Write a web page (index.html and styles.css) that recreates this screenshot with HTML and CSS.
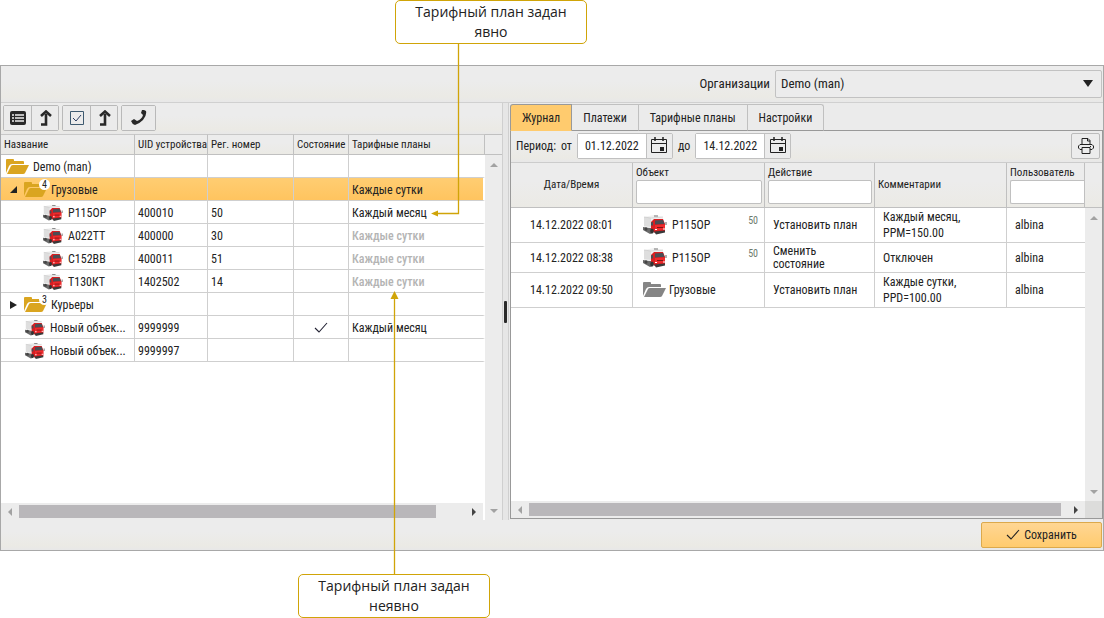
FILE: index.html
```html
<!DOCTYPE html>
<html lang="ru">
<head>
<meta charset="utf-8">
<title>Тарифные планы</title>
<link rel="stylesheet" href="styles.css">
</head>
<body>
<svg class="sprite" width="0" height="0" aria-hidden="true">
  <symbol id="truck" viewBox="0 0 24 20">
    <path d="M0 12l8 1 2 5-3 1-7-4z" fill="#6a6a6a"/>
    <path d="M1 2L11 0l9 2v3L9 13 1 12z" fill="#f1f1f1"/>
    <path d="M1 2l7 1v9l-7-1z" fill="#dedede"/>
    <path d="M1 2l7 1 12-1" stroke="#c4c4c4" stroke-width=".6" fill="none"/>
    <path d="M11 1h4" stroke="#777" stroke-width="1"/>
    <path d="M8 7l3-3 9 0 2 5v7l-10 2-4-3z" fill="#d81f22"/>
    <path d="M12 5.500l8-.5 1.500 4-9.500.5z" fill="#4a4e55"/>
    <path d="M8 7.500l2-.5v3.500H8z" fill="#4a4e55"/>
    <path d="M12 10l10-.5v5l-10 1z" fill="#f02a2c"/>
    <path d="M14 12.500h6" stroke="#7a1818" stroke-width="1"/>
    <path d="M11 16.500l11-1v2l-9 2z" fill="#3a3a3a"/>
    <path d="M12 14.500h2M20 14h2" stroke="#fff" stroke-width="1"/>
    <path d="M23 7v3" stroke="#666" stroke-width="1"/>
    <ellipse cx="9" cy="16" rx="1.800" ry="2.500" fill="#333"/>
    <ellipse cx="3" cy="14" rx="1.500" ry="1.800" fill="#444"/>
  </symbol>
  <symbol id="folder" viewBox="0 0 23 16">
    <path d="M0 14V1q0-1 1-1h6q1 0 1 1v1h9q1 0 1 1v2H6Q4 5 3 7z"/>
    <path d="M1 15L5 7q.5-1 2-1h16l-4 8q-.5 1-2 1z"/>
  </symbol>
  <symbol id="check" viewBox="0 0 14 12">
    <path d="M1 6l4 4 8-9" fill="none" stroke="currentColor" stroke-width="1.100"/>
  </symbol>
  <symbol id="up" viewBox="0 0 14 16">
    <path d="M3 14.500h5V4" fill="none" stroke="currentColor" stroke-width="2.600"/>
    <path d="M3 6l5-4.500L13 6" fill="none" stroke="currentColor" stroke-width="2.600"/>
  </symbol>
  <symbol id="calendar" viewBox="0 0 16 17">
    <path d="M.5 2.500h15v13H.5zM.5 6.500h15" fill="none" stroke="currentColor"/>
    <path d="M4 0v4M12 0v4" stroke="currentColor" stroke-width="1.500"/>
    <path d="M9 10h4v4H9z" fill="currentColor"/>
  </symbol>
</svg>

<main class="app">
  <header class="bar org-bar">
    <label for="org">Организации</label>
    <div class="select-box">
      <select id="org"><option>Demo (man)</option></select>
      <svg class="caret" width="10" height="7" viewBox="0 0 10 7"><path d="M0 0h10L5 7z"/></svg>
    </div>
  </header>

  <div class="panes">
    <section class="pane">
      <div class="bar tools">
        <div class="group">
          <button class="tool" aria-label="Список"><svg width="16" height="14" viewBox="0 0 16 14"><rect width="16" height="14" rx="2" fill="currentColor"/><path d="M2 4h2M2 7h2M2 10h2M5 4h9M5 7h9M5 10h9" stroke="#eee" stroke-width="1.600"/></svg></button>
          <button class="tool" aria-label="Свернуть список"><svg width="14" height="16"><use href="#up"/></svg></button>
        </div>
        <div class="group">
          <button class="tool" aria-label="Отметить"><svg width="14" height="14" viewBox="0 0 14 14" fill="none"><path d="M.5 .5h13v13H.5z" stroke="#3e5a70"/><path d="M3 7l3 3 5-6" stroke="#2b3d62"/></svg></button>
          <button class="tool" aria-label="Отмеченные вверх"><svg width="14" height="16"><use href="#up"/></svg></button>
        </div>
        <div class="group">
          <button class="tool wide" aria-label="Телефон"><svg width="16" height="16" viewBox="0 0 16 16"><path d="M11 0q2-.5 4 1 1 4-3 9-4 4-8 5-3-1-4-4l3-2 3 2q5-2 6-6l-2-2z" fill="currentColor"/></svg></button>
        </div>
      </div>
      <div class="grid-area">
        <div class="grid-main">
          <table class="tree">
            <colgroup><col class="c-name"><col class="c-uid"><col class="c-reg"><col class="c-state"><col></colgroup>
            <thead><tr><th>Название</th><th>UID устройства</th><th>Рег. номер</th><th>Состояние</th><th>Тарифные планы</th></tr></thead>
            <tbody>
              <tr><td><div class="node"><svg class="folder" width="23" height="16"><use href="#folder"/></svg>Demo (man)</div></td><td></td><td></td><td></td><td></td></tr>
              <tr class="selected"><td><div class="node branch"><svg class="twist" width="7" height="7" viewBox="0 0 7 7"><path d="M7 0v7H0z"/></svg><span class="badged"><svg class="folder" width="23" height="16"><use href="#folder"/></svg><span class="badge">4</span></span>Грузовые</div></td><td></td><td></td><td></td><td>Каждые сутки</td></tr>
              <tr><td><div class="node leaf deep"><svg width="20" height="18"><use href="#truck"/></svg>Р115ОР</div></td><td>400010</td><td>50</td><td></td><td>Каждый месяц</td></tr>
              <tr><td><div class="node leaf deep"><svg width="20" height="18"><use href="#truck"/></svg>А022ТТ</div></td><td>400000</td><td>30</td><td></td><td class="implicit">Каждые сутки</td></tr>
              <tr><td><div class="node leaf deep"><svg width="20" height="18"><use href="#truck"/></svg>С152ВВ</div></td><td>400011</td><td>51</td><td></td><td class="implicit">Каждые сутки</td></tr>
              <tr><td><div class="node leaf deep"><svg width="20" height="18"><use href="#truck"/></svg>Т130КТ</div></td><td>1402502</td><td>14</td><td></td><td class="implicit">Каждые сутки</td></tr>
              <tr><td><div class="node branch"><svg class="twist" width="7" height="8" viewBox="0 0 7 8"><path d="M0 0l7 4-7 4z"/></svg><span class="badged"><svg class="folder" width="23" height="16"><use href="#folder"/></svg><span class="badge">3</span></span>Курьеры</div></td><td></td><td></td><td></td><td></td></tr>
              <tr><td><div class="node leaf"><svg width="20" height="18"><use href="#truck"/></svg>Новый объек...</div></td><td>9999999</td><td></td><td class="state"><svg width="14" height="12"><use href="#check"/></svg></td><td>Каждый месяц</td></tr>
              <tr><td><div class="node leaf"><svg width="20" height="18"><use href="#truck"/></svg>Новый объек...</div></td><td>9999997</td><td></td><td></td><td></td></tr>
            </tbody>
          </table>
          <div class="hscroll"><span class="arrow left"></span><span class="thumb"></span><span class="arrow right on"></span></div>
        </div>
        <div class="vscroll"><span class="vhead"></span><span class="arrow up"></span><span class="arrow down"></span></div>
      </div>
    </section>

    <div class="splitter"><span class="grip"></span></div>

    <section class="pane">
      <nav class="tabs">
        <button class="tab active">Журнал</button><button class="tab">Платежи</button><button class="tab">Тарифные планы</button><button class="tab">Настройки</button>
      </nav>
      <div class="journal">
        <div class="bar period">
          <span class="period-name">Период:</span>
          <label for="from">от</label>
          <div class="date"><input id="from" type="text" value="01.12.2022"><button aria-label="Выбрать начало"><svg width="16" height="17"><use href="#calendar"/></svg></button></div>
          <label for="to">до</label>
          <div class="date"><input id="to" type="text" value="14.12.2022"><button aria-label="Выбрать конец"><svg width="16" height="17"><use href="#calendar"/></svg></button></div>
          <button class="print" aria-label="Печать"><svg width="16" height="16" viewBox="0 0 16 16" fill="none" stroke="currentColor"><path d="M4 6V.5h6l2 2V6M9.500 .5V3H12M4 11.500H2L.5 10V8L2 6.500h12L15.500 8v2L14 11.500h-2M4 9.500h8v6H4zM12 8.500h1"/></svg></button>
        </div>
        <div class="grid-area">
          <div class="grid-main">
            <table class="log">
              <colgroup><col class="l-date"><col class="l-object"><col class="l-action"><col class="l-comment"><col></colgroup>
              <thead><tr>
                <th class="center">Дата/Время</th>
                <th class="filter"><label for="f-object">Объект</label><input id="f-object" type="text"></th>
                <th class="filter"><label for="f-action">Действие</label><input id="f-action" type="text"></th>
                <th>Комментарии</th>
                <th class="filter cut"><label for="f-user">Пользователь</label><input id="f-user" type="text"></th>
              </tr></thead>
              <tbody>
                <tr class="tall"><td class="center">14.12.2022 08:01</td><td><div class="object"><svg width="24" height="20"><use href="#truck"/></svg>Р115ОР<small>50</small></div></td><td>Установить план</td><td>Каждый месяц,<br>PPM=150.00</td><td>albina</td></tr>
                <tr><td class="center">14.12.2022 08:38</td><td><div class="object"><svg width="24" height="20"><use href="#truck"/></svg>Р115ОР<small>50</small></div></td><td class="tight">Сменить<br>состояние</td><td>Отключен</td><td>albina</td></tr>
                <tr class="tall"><td class="center">14.12.2022 09:50</td><td><div class="object group-object"><svg class="gray" width="23" height="16"><use href="#folder"/></svg>Грузовые</div></td><td>Установить план</td><td>Каждые сутки,<br>PPD=100.00</td><td>albina</td></tr>
              </tbody>
            </table>
            <div class="hscroll"><span class="arrow left"></span><span class="thumb long"></span><span class="arrow right on"></span></div>
          </div>
          <div class="vscroll"><span class="vhead tall-head"></span><span class="arrow up"></span><span class="arrow down"></span><span class="corner"></span></div>
        </div>
      </div>
    </section>
  </div>

  <footer class="bar footer">
    <button class="save"><svg width="14" height="12"><use href="#check"/></svg>Сохранить</button>
  </footer>
</main>

<aside class="note explicit">Тарифный план задан<br>явно</aside>
<aside class="note inherited">Тарифный план задан<br>неявно</aside>
<svg class="leaders" width="600" height="618" viewBox="0 0 600 618" aria-hidden="true">
  <path d="M458.500 43v170.500H437M394.500 574V298" fill="none" stroke="#d0a408" stroke-width="1.300"/>
  <path d="M431 213.500l7-3v6zM394.500 291l4 8h-8z" fill="#d0a408"/>
</svg>
</body>
</html>
```
FILE: styles.css
```css
* { box-sizing: border-box; }

body {
  margin: 0;
  min-height: 100vh;
  padding: 65px 0 67px;
  display: flex;
  flex-direction: column;
  position: relative;
  background: #fff;
  color: #222;
  font: 12px/16px "Roboto Condensed", "Liberation Sans Narrow", Roboto, sans-serif;
}

button, input, select { font: inherit; color: inherit; }
button { padding: 0; cursor: pointer; }
svg { display: block; flex: none; }
.sprite { position: absolute; }

.app {
  flex: 1;
  display: flex;
  flex-direction: column;
  border: 1px solid #a8a8a8;
  background: #ebebeb;
}

.bar {
  display: flex;
  align-items: center;
  background: linear-gradient(#ececec 40%, #ebeae5 85%, #e8e8e8);
}

.org-bar {
  height: 37px;
  padding: 0 1px;
  gap: 5px;
  justify-content: flex-end;
  border-bottom: 1px solid #d0d0d0;
  font-size: 13px;
}
.select-box { position: relative; width: 327px; }
.select-box select {
  appearance: none;
  display: block;
  width: 100%;
  height: 28px;
  padding: 0 5px;
  border: 1px solid #c2c2c2;
  border-radius: 2px;
  background: #ececec;
}
.caret { position: absolute; right: 9px; top: 10px; pointer-events: none; fill: #222; }

.panes {
  flex: 1;
  display: grid;
  grid-template-columns: minmax(0, 501fr) 7px minmax(0, 594fr);
}
.pane { display: flex; flex-direction: column; min-width: 0; }

.tools { height: 31px; padding: 0 2px 2px; gap: 3px; }
.group {
  display: flex;
  border: 1px solid #b9b9b9;
  border-radius: 2px;
}
.tool {
  width: 27px;
  height: 24px;
  display: grid;
  place-items: center;
  border: 0;
  background: #ebebeb;
  color: #282828;
}
.tool + .tool { border-left: 1px solid #b9b9b9; }
.tool.wide { width: 33px; }

.grid-area { flex: 1; display: flex; min-height: 0; background: #fff; }
.grid-main { flex: 1; min-width: 0; display: flex; flex-direction: column; justify-content: space-between; }

table { width: 100%; border-collapse: separate; border-spacing: 0; table-layout: fixed; }
th, td {
  padding: 0 3px;
  text-align: left;
  font-weight: 400;
  white-space: nowrap;
  border-right: 1px solid #cfcfcf;
  border-bottom: 1px solid #cfcfcf;
}
td:last-child { border-right: 0; }
th {
  font-size: 11px;
  background: linear-gradient(#ececec 40%, #ebeae5);
  border-color: #c0c0c0;
}

.tree th { height: 21px; border-top: 1px solid #c8c8c8; }
.tree td { height: 23px; padding-top: 1px; }
.tree td:last-child { border-right: 2px solid #fff; }
.c-name { width: 134px; }
.c-uid { width: 73px; }
.c-reg { width: 86px; }
.c-state { width: 55px; }
.selected td { background: linear-gradient(#ffcd72, #ffc45f); }
.tree .implicit { color: #b4b4b4; font-weight: 500; }
.state svg { margin: auto; color: #223; }

.node { display: flex; align-items: center; gap: 4px; padding-left: 2px; height: 21px; }
.folder { fill: #daa520; }
.branch { padding-left: 6px; gap: 4px; }
.twist { fill: #222; margin-right: 3px; }
.badged { position: relative; }
.badge {
  position: absolute;
  right: -3px;
  top: -3px;
  width: 11px;
  height: 11px;
  border-radius: 50%;
  background: #fff;
  font-size: 10px;
  line-height: 11px;
  text-align: center;
}
.leaf { padding-left: 21px; gap: 5px; }
.deep { padding-left: 39px; }

.hscroll { display: flex; align-items: center; height: 17px; padding: 0 7px; background: #ececec; }
.thumb { flex: none; width: 89%; height: 13px; margin: 0 7px; background: #b9b7ba; }
.thumb.long { width: 95%; }
.vscroll { width: 17px; flex: none; display: flex; flex-direction: column; align-items: center; background: #ececec; }
.tree + .hscroll { margin-right: 2px; }
.vhead { width: 100%; height: 21px; border: solid #c0c0c0; border-width: 1px 0; }
.tall-head { height: 45px; border-top: 0; background: linear-gradient(#ececec 40%, #ebeae5); }
.corner { width: 100%; height: 17px; background: #dcdcdb; }

.arrow { width: 0; height: 0; border: 4px solid transparent; color: #a2a2a2; }
.arrow.on { color: #444; }
.arrow.left { border-left: 0; border-right-color: currentColor; }
.arrow.right { border-right: 0; border-left-color: currentColor; margin-left: auto; }
.arrow.up { border-top: 0; border-bottom-color: currentColor; margin-top: 8px; }
.arrow.down { border-bottom: 0; border-top-color: currentColor; margin: auto 0 7px; }

.splitter {
  display: grid;
  place-items: center;
  border: solid #cfcfcf;
  border-width: 0 1px;
  background: #e6e6e6;
}
.grip { width: 3px; height: 22px; border-radius: 1px; background: #2a2a2a; }

.tabs { display: flex; height: 28px; padding: 1px 0 0 1px; }
.tab {
  height: 27px;
  padding: 0 11px;
  border: 1px solid #c0c0c0;
  border-left: 0;
  border-bottom-color: #999;
  background: #ebebeb;
}
.tab.active { border-color: #999; border-left: 1px solid #999; border-bottom-color: #ffcb6e; border-radius: 3px 0 0 0; background: #ffcb6e; }
.tab:last-child { border-radius: 0 3px 0 0; }
.journal {
  flex: 1;
  display: flex;
  flex-direction: column;
  margin: 0 0 1px 1px;
  border: solid #999;
  border-width: 0 1px 1px;
}
.tabs::after { content: ""; flex: 1; border-bottom: 1px solid #999; }

.period { height: 32px; padding: 0 2px 2px 5px; gap: 5px; border-bottom: 1px solid #ccc; }
.date { display: flex; height: 26px; border: 1px solid #c0c0c0; border-radius: 2px; }
.date input { width: 69px; padding: 0 0 0 7px; border: 0; border-right: 1px solid #c0c0c0; }
.date button { width: 25px; display: grid; place-items: center; border: 0; background: #ececec; }
.print { width: 29px; height: 26px; margin-left: auto; display: grid; place-items: center; border: 1px solid #bbb; border-radius: 2px; background: #ececec; }

.log th { height: 45px; }
.log td { height: 30px; padding: 0 8px; }
.log .tall td { height: 35px; }
.log .center { text-align: center; padding: 0; }
.l-date { width: 122px; }
.l-object { width: 132px; }
.l-action { width: 110px; }
.l-comment { width: 132px; }
.filter { vertical-align: top; padding: 3px 2px 0 3px; }
.filter label { display: block; line-height: 14px; }
.filter input { display: block; width: 100%; height: 24px; border: 1px solid #c0c0c0; border-radius: 2px; background: #fff; }
.filter.cut { padding-right: 0; }
.filter.cut input { border-right: 0; border-radius: 2px 0 0 2px; }
.object { display: flex; align-items: center; gap: 5px; padding-left: 2px; }
.group-object { gap: 3px; }
.object small { margin: 0 -2px 8px auto; font-size: 10px; line-height: 12px; color: #6d7a6d; }
.gray { fill: #858585; }
.log .tight { line-height: 13px; }

.footer { height: 30px; padding: 0 1px; justify-content: flex-end; }
.save {
  display: flex;
  align-items: center;
  justify-content: center;
  gap: 4px;
  width: 121px;
  height: 26px;
  border: 1px solid #dca94c;
  border-radius: 2px;
  background: linear-gradient(#ffd694, #ffcb6e);
}

.note {
  position: absolute;
  width: 192px;
  height: 44px;
  border: 1px solid #d0a408;
  border-radius: 5px;
  background: #fff;
  color: #222;
  font: 14px/20px "Open Sans", "Noto Sans", sans-serif;
  text-align: center;
  padding-top: 1px;
}
.explicit { left: 395px; top: 0; }
.inherited { left: 298px; top: 574px; }
.leaders { position: absolute; left: 0; top: 0; pointer-events: none; }
```
